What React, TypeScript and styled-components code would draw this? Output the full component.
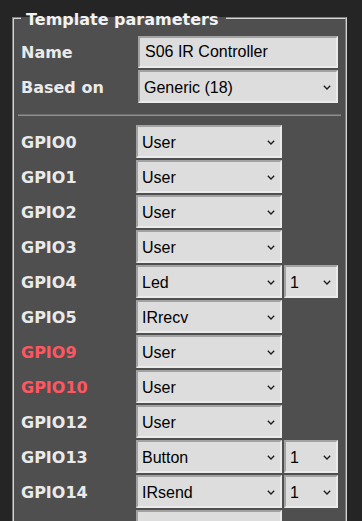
import { FunctionComponent, Fragment } from "react";
import styled, { createGlobalStyle } from "styled-components";

interface PinRow {
  name: string;
  value: string;
  index?: string;
  warn?: boolean;
}

const pins: PinRow[] = [
  { name: "GPIO0", value: "User" },
  { name: "GPIO1", value: "User" },
  { name: "GPIO2", value: "User" },
  { name: "GPIO3", value: "User" },
  { name: "GPIO4", value: "Led", index: "1" },
  { name: "GPIO5", value: "IRrecv" },
  { name: "GPIO9", value: "User", warn: true },
  { name: "GPIO10", value: "User", warn: true },
  { name: "GPIO12", value: "User" },
  { name: "GPIO13", value: "Button", index: "1" },
  { name: "GPIO14", value: "IRsend", index: "1" },
  { name: "GPIO15", value: "User" },
];

const GlobalStyle = createGlobalStyle`
  html, body {
    margin: 0;
    background: #252525;
  }
  body {
    font-family: "DejaVu Sans", Verdana, sans-serif;
    color: #eaeaea;
  }
`;

const Page = styled.div`
  padding: 7px 0 0 12px;
`;

const Fieldset = styled.fieldset`
  box-sizing: border-box;
  width: 335px;
  min-width: 0;
  margin: 0;
  padding: 7px 7px 8px 7px;
  background: #4f4f4f;
  border: 2px groove #d4d4d4;
`;

const Legend = styled.legend`
  padding: 3px 7px 0 5px;
  font-size: 16px;
  font-weight: bold;
  color: #f2f2f2;
`;

const TopGrid = styled.div`
  display: grid;
  grid-template-columns: 117px 200px;
  row-gap: 2px;
  align-items: center;
`;

const GpioGrid = styled.div`
  display: grid;
  grid-template-columns: 113px 146px 54px;
  grid-auto-rows: 33px;
  column-gap: 2px;
  row-gap: 2px;
  align-items: center;
`;

const Label = styled.b<{ $warn?: boolean }>`
  font-size: 16px;
  padding-top: 1px;
  color: ${(p) => (p.$warn ? "#ff5661" : "#eaeaea")};
`;

const fieldLook = `
  box-sizing: border-box;
  width: 100%;
  margin: 0;
  background: #dddddd;
  color: #000;
  font-family: "Liberation Sans", Arial, sans-serif;
  font-size: 16px;
  border-style: solid;
  border-width: 2px;
  border-color: #a2a2a2 #ebebeb #ebebeb #a2a2a2;
  border-radius: 0;
  outline: none;
`;

const TextInput = styled.input`
  ${fieldLook}
  height: 32px;
  padding: 0 5px;
`;

const SelectWrap = styled.div`
  position: relative;
  height: 33px;
`;

const Select = styled.select`
  ${fieldLook}
  height: 100%;
  padding: 2px 18px 0 4px;
  appearance: none;
  -webkit-appearance: none;
`;

const Chevron = styled.svg`
  position: absolute;
  right: 7px;
  top: 50%;
  width: 8px;
  height: 5px;
  margin-top: -2px;
  pointer-events: none;
`;

const Divider = styled.hr`
  height: 0;
  margin: 11px -3px 9px;
  border: 0;
  border-top: 1px solid #6e6e6e;
  border-bottom: 1px solid #8e8e8e;
`;

const Dropdown: FunctionComponent<{ value: string }> = ({ value }) => (
  <SelectWrap>
    <Select defaultValue={value}>
      <option value={value}>{value}</option>
    </Select>
    <Chevron viewBox="0 0 8 5">
      <polyline
        points="0.8,0.8 4,4 7.2,0.8"
        fill="none"
        stroke="#1a1a1a"
        strokeWidth="1.3"
      />
    </Chevron>
  </SelectWrap>
);

const App: FunctionComponent = () => (
  <Page>
    <GlobalStyle />
    <Fieldset>
      <Legend>Template parameters</Legend>
      <TopGrid>
        <Label>Name</Label>
        <TextInput defaultValue="S06 IR Controller" />
        <Label>Based on</Label>
        <Dropdown value="Generic (18)" />
      </TopGrid>
      <Divider />
      <GpioGrid>
        {pins.map((pin) => (
          <Fragment key={pin.name}>
            <Label $warn={pin.warn}>{pin.name}</Label>
            <Dropdown value={pin.value} />
            {pin.index ? <Dropdown value={pin.index} /> : <span />}
          </Fragment>
        ))}
      </GpioGrid>
    </Fieldset>
  </Page>
);

export default App;
